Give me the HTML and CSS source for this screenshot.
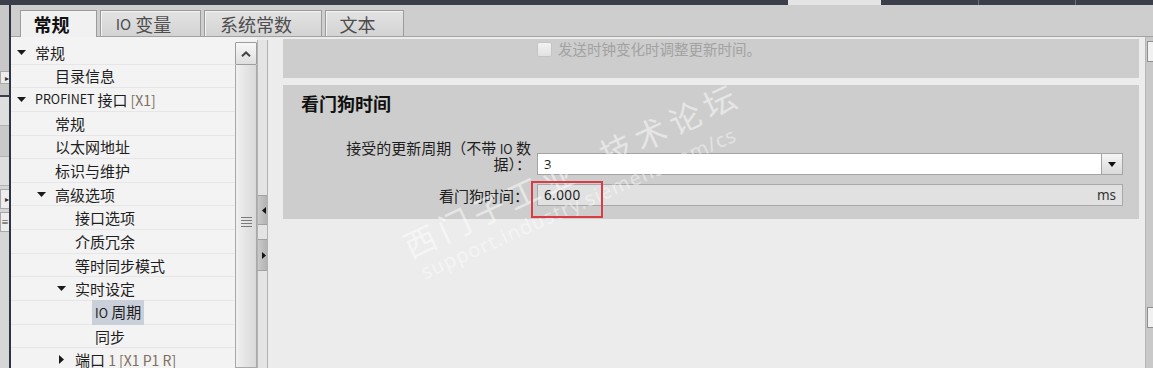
FILE: index.html
```html
<!DOCTYPE html>
<html lang="zh-CN">
<head>
<meta charset="utf-8">
<title>属性</title>
<link rel="stylesheet" href="styles.css">
</head>
<body>
<div class="topbar">
  <div class="tb-a"></div>
  <div class="tb-active"></div>
  <div class="tb-b"></div>
  <div class="tb-c"></div>
  <div class="tb-d"></div>
</div>
<div class="main">
  <div class="sliver">
    <div class="sl-a"><div class="sl-box">▸</div></div>
    <div class="sl-line"></div>
    <div class="sl-b"></div>
    <div class="sl-c"></div>
    <div class="sl-b"></div>
    <div class="sl-box2">▸</div>
    <div class="sl-box2">≡</div>
    <div class="sl-d"></div>
  </div>
  <div class="panel">
    <div class="tabbar">
      <div class="tab t1 active">常规</div>
      <div class="tab t2"><span class="tlat">IO</span>&nbsp;变量</div>
      <div class="tab t3">系统常数</div>
      <div class="tab t4">文本</div>
    </div>
    <div class="body">
      <div class="tree">
        <div class="row l0"><span class="arr"><svg width="9" height="5" viewBox="0 0 9 5"><path d="M0 0h9L4.5 5z" fill="#1a1a1a"/></svg></span>常规</div>
        <div class="row l1"><span class="arr"></span>目录信息</div>
        <div class="row l0"><span class="arr"><svg width="9" height="5" viewBox="0 0 9 5"><path d="M0 0h9L4.5 5z" fill="#1a1a1a"/></svg></span><span class="lat">PROFINET&nbsp;</span>接口<span class="lat2 dim">&nbsp;[X1]</span></div>
        <div class="row l1"><span class="arr"></span>常规</div>
        <div class="row l1"><span class="arr"></span>以太网地址</div>
        <div class="row l1"><span class="arr"></span>标识与维护</div>
        <div class="row l1"><span class="arr"><svg width="9" height="5" viewBox="0 0 9 5"><path d="M0 0h9L4.5 5z" fill="#1a1a1a"/></svg></span>高级选项</div>
        <div class="row l2"><span class="arr"></span>接口选项</div>
        <div class="row l2"><span class="arr"></span>介质冗余</div>
        <div class="row l2"><span class="arr"></span>等时同步模式</div>
        <div class="row l2"><span class="arr"><svg width="9" height="5" viewBox="0 0 9 5"><path d="M0 0h9L4.5 5z" fill="#1a1a1a"/></svg></span>实时设定</div>
        <div class="row l3"><span class="arr"></span><span class="sel"><span class="lat">IO</span> 周期</span></div>
        <div class="row l3"><span class="arr"></span>同步</div>
        <div class="row l2"><span class="arr arr-r"><svg width="5" height="9" viewBox="0 0 5 9"><path d="M0 0l5 4.5L0 9z" fill="#1a1a1a"/></svg></span>端口<span class="lat2 dim">&nbsp;1 [X1 P1 R]</span></div>
      </div>
      <div class="vscroll">
        <div class="vs-btn"><svg width="10" height="6" viewBox="0 0 10 6"><path d="M1 5.3L5 1.5L9 5.3" stroke="#444" stroke-width="2" fill="none"/></svg></div>
        <div class="vs-track"><svg width="11" height="10" viewBox="0 0 11 10"><path d="M0 .5h11M0 3.5h11M0 6.5h11M0 9.5h11" stroke="#7a7a7a"/></svg></div>
      </div>
      <div class="splitter">
        <div class="sp-block"><svg width="4" height="7" viewBox="0 0 4 7"><path d="M4 0v7L0 3.5z" fill="#111"/></svg></div>
        <div class="sp-block sp-b2"><svg width="4" height="7" viewBox="0 0 4 7"><path d="M0 0v7L4 3.5z" fill="#111"/></svg></div>
      </div>
      <div class="content">
        <div class="sec1">
          <div class="cb-row"><span class="cb"></span><span class="cb-text">发送时钟变化时调整更新时间。</span></div>
        </div>
        <div class="sec2">
          <div class="sec-title">看门狗时间</div>
          <div class="form">
            <div class="lbl lbl-top">接受的更新周期（不带 <span class="lat">IO</span> 数据）：</div>
            <div class="select"><span class="val">3</span><span class="dd"><svg width="8" height="5" viewBox="0 0 8 5"><path d="M0 0h8L4 5z" fill="#111"/></svg></span></div>
            <div class="lbl lbl-mid">看门狗时间：</div>
            <div class="input"><span class="val">6.000</span><span class="unit">ms</span></div>
          </div>
        </div>
      </div>
      <div class="rscroll">
        <div class="rs-btn"></div>
        <div class="rs-btn rs-btn2"></div>
      </div>
    </div>
  </div>
</div>
<div class="wm wm1">西门子工业&nbsp;&nbsp;技术论坛</div>
<div class="wm wm2">support.industry.siemens.com/cs</div>
<div class="redbox"></div>
</body>
</html>
```
FILE: styles.css
```css
body {
  margin: 0;
  width: 1153px;
  height: 368px;
  overflow: hidden;
  position: relative;
  font-family: "Noto Sans CJK SC", "Noto Sans", sans-serif;
  color: #1e1e1e;
  background: #ececec;
}

/* top dark strip */
.topbar { display: flex; height: 5px; background: #3b3f4b; }
.tb-a { width: 788px; }
.tb-active { width: 93px; background: #e4e4e4; }
.tb-b { width: 97px; border-right: 1px solid #6c707a; }
.tb-c { width: 96px; border-right: 1px solid #6c707a; }
.tb-d { flex: 1; }

.main { display: flex; height: 363px; }

/* left sliver of neighbouring panel */
.sliver {
  width: 9px;
  border-right: 2px solid #30343f;
  background: #d4d4d4;
  display: flex;
  flex-direction: column;
  overflow: hidden;
  font-size: 8px;
  color: #333;
}
.sl-a { height: 90px; background: #c8c8c8; padding-top: 66px; box-sizing: border-box; }
.sl-box { height: 11px; background: #ececec; border: 1px solid #aaa; border-right: none; text-align: right; line-height: 11px; }
.sl-line { height: 2px; background: #3a3f4b; }
.sl-b { height: 28px; background: #dedede; border-bottom: 1px solid #b3b3b3; }
.sl-c { height: 30px; background: #c9c9c9; border-bottom: 1px solid #b3b3b3; }
.sl-box2 { height: 18px; margin-top: 3px; background: #ededed; border: 1px solid #a8a8a8; border-right: none; line-height: 18px; text-align: right; }
.sl-d { flex: 1; background: #d6d6d6; }

.panel { flex: 1; display: flex; flex-direction: column; min-width: 0; }

/* tabs */
.tabbar {
  height: 32px;
  box-sizing: border-box;
  background: #cecece;
  border-bottom: 1px solid #a2a2a2;
  display: flex;
  align-items: flex-end;
  gap: 3px;
  padding-left: 9px;
}
.tab {
  height: 26px;
  box-sizing: border-box;
  border: 1px solid #9b9b9b;
  border-bottom: none;
  background: linear-gradient(#e3e3e3, #d3d3d3);
  box-shadow: inset 1px 1px 0 #f3f3f3;
  display: flex;
  align-items: center;
  justify-content: center;
  padding-right: 14px;
  font-size: 18px;
  line-height: 1;
  color: #4d4d4d;
}
.tab.active {
  height: 27px;
  margin-bottom: -1px;
  background: #f1f1f1;
  font-weight: bold;
  color: #111;
}
.t1 { width: 77px; }
.t2 { width: 101px; }
.t3 { width: 118px; }
.t4 { width: 79px; }
.tlat { font-size: 15px; }

.body { flex: 1; display: flex; min-height: 0; }

/* tree */
.tree {
  width: 224px;
  flex: none;
  background: #f3f3f3;
  padding-top: 4px;
  box-sizing: border-box;
  font-size: 15px;
}
.row {
  height: 23.65px;
  box-sizing: border-box;
  border-bottom: 1px solid #e6e6e6;
  display: flex;
  align-items: center;
  white-space: nowrap;
  line-height: 1;
}
.l0 { padding-left: 6px; }
.l1 { padding-left: 26px; }
.l2 { padding-left: 46px; }
.l3 { padding-left: 66px; }
.arr { width: 18px; flex: none; display: flex; align-items: center; }
.arr-r { padding-left: 2px; box-sizing: border-box; }
.lat { font-size: 12.5px; }
.lat2 { font-size: 14px; }
.dim { color: #7d6e60; }
.sel { background: #c9d0da; padding: 4px 3px 5px; margin-left: -3px; }

/* tree scrollbar */
.vscroll {
  width: 22px;
  flex: none;
  padding-top: 5px;
  display: flex;
  flex-direction: column;
  box-sizing: border-box;
  background: #f3f3f3;
}
.vs-btn {
  height: 23px;
  flex: none;
  box-sizing: border-box;
  border: 1px solid #9d9d9d;
  border-radius: 1px;
  background: linear-gradient(#f8f8f8, #dedede);
  display: flex;
  align-items: center;
  justify-content: center;
}
.vs-track {
  flex: 1;
  border: 1px solid #a9a9a9;
  border-top: none;
  background: linear-gradient(to right, #f0f0f0, #d9d9d9);
  display: flex;
  justify-content: center;
  align-items: flex-start;
  padding-top: 152px;
}

/* splitter */
.splitter {
  width: 11px;
  flex: none;
  box-sizing: border-box;
  margin-top: 3px;
  border-left: 1px solid #b2b2b2;
  border-right: 1px solid #b2b2b2;
  background: #e4e4e4;
  display: flex;
  flex-direction: column;
  padding-top: 155px;
  gap: 14px;
}
.sp-block {
  height: 28px;
  background: linear-gradient(to right, #c9c9c9, #b3b3b3);
  border-top: 1px solid #a2a2a2;
  border-bottom: 1px solid #a2a2a2;
  display: flex;
  align-items: center;
  justify-content: flex-end;
  padding-right: 1px;
}
.sp-b2 { height: 30px; }

/* content */
.content {
  flex: 1;
  min-width: 0;
  padding: 2px 6px 0 15px;
  background: #ececec;
  display: flex;
  flex-direction: column;
  gap: 7px;
}
.sec1 {
  height: 39px;
  flex: none;
  background: #cdcdcd;
  box-sizing: border-box;
  padding: 3px 0 0 254px;
}
.cb-row { display: flex; align-items: center; gap: 6px; height: 15px; }
.cb {
  width: 15px;
  height: 15px;
  box-sizing: border-box;
  border: 1px solid #c4c4c4;
  border-radius: 2px;
  background: linear-gradient(#f2f2f2, #e2e2e2);
}
.cb-text { font-size: 14.5px; color: #a2a2a2; line-height: 1; }

.sec2 {
  height: 134px;
  flex: none;
  box-sizing: border-box;
  background: #cdcdcd;
  padding: 8px 16px 0 0;
}
.sec-title {
  padding-left: 18px;
  font-size: 18px;
  font-weight: bold;
  line-height: 20px;
  height: 20px;
  color: #111;
}
.form {
  margin-top: 27px;
  display: grid;
  grid-template-columns: 203px 1fr;
  column-gap: 6px;
  row-gap: 9px;
  padding-left: 45px;
}
.lbl { text-align: right; font-size: 15px; line-height: 15px; color: #1e1e1e; }
.lbl-top { align-self: end; margin-bottom: 4px; }
.lbl-mid { align-self: center; padding-right: 2px; }
.select {
  align-self: end;
  height: 22px;
  box-sizing: border-box;
  border: 1px solid #a4a4a4;
  background: #fff;
  display: flex;
  align-items: center;
  font-family: "Noto Sans", sans-serif;
  font-size: 13px;
}
.val { flex: 1; padding-left: 6px; letter-spacing: 0.4px; }
.dd {
  width: 21px;
  height: 100%;
  box-sizing: border-box;
  border-left: 1px solid #a4a4a4;
  background: linear-gradient(#f5f5f5, #dadada);
  display: flex;
  align-items: center;
  justify-content: center;
}
.input {
  height: 22px;
  box-sizing: border-box;
  border: 1px solid #a9a9a9;
  background: #e1e1e1;
  display: flex;
  align-items: center;
  padding-right: 6px;
  font-family: "Noto Sans", sans-serif;
  font-size: 13.5px;
  color: #222;
}
.unit { color: #333; }

/* right scrollbar */
.rscroll {
  width: 8px;
  flex: none;
  box-sizing: border-box;
  background: #c9c9c9;
  border-left: 1px solid #b5b5b5;
  padding-top: 4px;
  display: flex;
  flex-direction: column;
}
.rs-btn {
  height: 21px;
  margin-left: 1px;
  box-sizing: border-box;
  border: 1px solid #8e8e8e;
  border-right: none;
  background: #f1f1f1;
}
.rs-btn2 { margin-top: 245px; }

/* overlays */
.wm {
  position: absolute;
  transform-origin: 0 0;
  white-space: nowrap;
  color: rgba(255, 255, 255, 0.5);
  line-height: 1;
  pointer-events: none;
}
.wm1 {
  left: 398px;
  top: 232px;
  font-size: 32px;
  letter-spacing: 6px;
  transform: rotate(-25deg);
}
.wm2 {
  left: 418px;
  top: 264px;
  font-family: "Noto Sans", sans-serif;
  font-size: 20px;
  letter-spacing: 1px;
  transform: rotate(-24deg);
  color: rgba(255, 255, 255, 0.45);
}
.redbox {
  position: absolute;
  left: 531px;
  top: 181px;
  width: 72px;
  height: 37px;
  box-sizing: border-box;
  border: 2px solid #d83c44;
}
```
